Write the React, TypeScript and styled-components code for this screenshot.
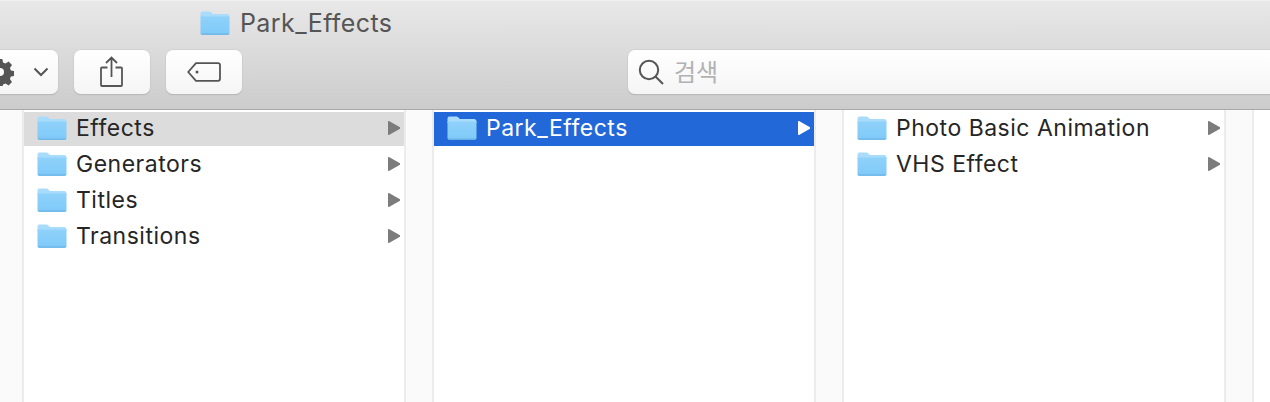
import React from "react";
import styled, { createGlobalStyle } from "styled-components";

const GlobalStyle = createGlobalStyle`
  html, body {
    margin: 0;
    padding: 0;
    background: #ffffff;
  }
  body {
    font-family: "Inter", "Liberation Sans", "Noto Sans CJK KR", sans-serif;
  }
`;

const Window = styled.div`
  width: 1270px;
  height: 402px;
  overflow: hidden;
  display: flex;
  flex-direction: column;
`;

// 상단 툴바
const Chrome = styled.div`
  height: 110px;
  box-sizing: border-box;
  flex: none;
  border-top: 1px solid #f0f0f0;
  border-bottom: 1px solid #a9a9a9;
  background: linear-gradient(#e8e8e8, #cccccc);
  display: flex;
  flex-direction: column;
`;

const TitleRow = styled.div`
  height: 44px;
  padding-left: 200px;
  display: flex;
  align-items: center;
  gap: 10px;
`;

const TitleText = styled.span`
  font-size: 25px;
  letter-spacing: 0.4px;
  color: #555555;
`;

const ToolRow = styled.div`
  display: flex;
  align-items: flex-start;
  padding-top: 5px;
`;

const ToolButton = styled.div<{ $width: number; $left: number }>`
  box-sizing: border-box;
  width: ${(p) => p.$width}px;
  height: 44px;
  margin-left: ${(p) => p.$left}px;
  flex: none;
  display: flex;
  align-items: center;
  justify-content: center;
  background: linear-gradient(#ffffff, #f5f5f5);
  border-radius: 7px;
  box-shadow: 0 0 0 0.5px #c8c8c8, 0 1px 1px #a8a8a8;
  color: #555555;
`;

const GearButton = styled(ToolButton)`
  justify-content: flex-start;
  gap: 19px;
  border-radius: 0 7px 7px 0;
  overflow: hidden;
`;

const GearClip = styled.div`
  width: 14px;
  height: 28px;
  overflow: hidden;
  display: flex;
  justify-content: flex-end;
`;

const SearchBox = styled(ToolButton)`
  justify-content: flex-start;
  padding-left: 10px;
  gap: 10px;
  border-radius: 7px 0 0 7px;
`;

const SearchHint = styled.span`
  font-size: 24px;
  line-height: 28px;
  margin-top: 1px;
  color: #b2b2b2;
`;

// 컬럼 영역
const Browser = styled.div`
  flex: 1;
  display: flex;
  background: #fafafa;
`;

const Column = styled.div<{ $left: number }>`
  box-sizing: border-box;
  width: 384px;
  flex: none;
  margin-left: ${(p) => p.$left}px;
  background: #ffffff;
  border-left: 2px solid #ececec;
  border-right: 2px solid #ececec;
`;

const EmptyColumn = styled.div`
  flex: 1;
  margin-left: 26px;
  background: #ffffff;
  border-left: 2px solid #ececec;
`;

const Row = styled.div<{ $state?: "active" | "muted" }>`
  box-sizing: border-box;
  height: 36px;
  display: flex;
  align-items: center;
  border-top: 2px solid transparent;
  padding: 0 4px 2px 13px;
  background-clip: padding-box;
  gap: 9px;
  font-size: 23px;
  letter-spacing: 0.5px;
  color: ${(p) => (p.$state === "active" ? "#ffffff" : "#262626")};
  background-color: ${(p) =>
    p.$state === "active" ? "#2368d9" : p.$state === "muted" ? "#dcdcdc" : "transparent"};
`;

const RowLabel = styled.span`
  flex: 1;
`;

const Folder = ({ size = 30 }: { size?: number }) => (
  <svg width={size} height={size * 0.8} viewBox="0 0 30 24" style={{ flex: "none" }}>
    <defs>
      <linearGradient id="folderFront" x1="0" y1="0" x2="0" y2="1">
        <stop offset="0" stopColor="#8fd2fb" />
        <stop offset="1" stopColor="#7fc9f8" />
      </linearGradient>
    </defs>
    <path
      d="M0.5 2.5C0.5 1 1.5 0.4 2.8 0.4h6.4c1 0 1.6.4 2.2 1l1.4 1.6h14.4c1.3 0 2.3 1 2.3 2.3V7H0.5z"
      fill="#a9dcfb"
    />
    <path
      d="M0.5 5.5h29v16.2c0 1.2-.9 2-2 2H2.5c-1.1 0-2-.8-2-2z"
      fill="url(#folderFront)"
    />
    <path d="M0.5 22.6h29c0 .8-.9 1.2-2 1.2H2.5c-1.1 0-2-.4-2-1.2z" fill="#68b2e6" />
  </svg>
);

const Arrow = ({ color = "#7c7c7c" }: { color?: string }) => (
  <svg width="12" height="14" viewBox="0 0 12 14" style={{ flex: "none" }}>
    <path d="M0 0.2L1 0 12 6.2V7.8L1 14 0 13.8z" fill={color} />
  </svg>
);

const columns = [
  {
    left: 22,
    rows: [
      { name: "Effects", state: "muted" as const },
      { name: "Generators" },
      { name: "Titles" },
      { name: "Transitions" },
    ],
  },
  { left: 26, rows: [{ name: "Park_Effects", state: "active" as const }] },
  { left: 26, rows: [{ name: "Photo Basic Animation" }, { name: "VHS Effect" }] },
];

const App = () => {
  return (
    <>
      <GlobalStyle />
      <Window>
        <Chrome>
          <TitleRow>
            <Folder />
            <TitleText>Park_Effects</TitleText>
          </TitleRow>
          <ToolRow>
            <GearButton $width={58} $left={0}>
              <GearClip>
                <svg width="28" height="28" viewBox="0 0 28 28" style={{ flex: "none" }}>
                  <path
                    fill="#555555"
                    fillRule="evenodd"
                    d="M11.6 1h4.8l.6 3.6 2.6 1 3-2.1 3.4 3.4-2.1 3 1 2.6 3.6.6v4.8l-3.6.6-1 2.6 2.1 3-3.4 3.4-3-2.1-2.6 1-.6 3.6h-4.8l-.6-3.6-2.6-1-3 2.1-3.4-3.4 2.1-3-1-2.6-3.6-.6v-4.8l3.6-.6 1-2.6-2.1-3 3.4-3.4 3 2.1 2.6-1zM14 10a4 4 0 1 0 0 8 4 4 0 0 0 0-8z"
                  />
                </svg>
              </GearClip>
              <svg width="16" height="10" viewBox="0 0 16 10">
                <path d="M1.5 1.5L8 8l6.5-6.5" fill="none" stroke="#555555" strokeWidth="2" />
              </svg>
            </GearButton>
            <ToolButton $width={76} $left={16}>
              <svg width="24" height="32" viewBox="0 0 24 32">
                <path
                  d="M7.5 11.5H2a1 1 0 0 0-1 1V29a1 1 0 0 0 1 1h19a1 1 0 0 0 1-1V12.5a1 1 0 0 0-1-1h-5.5M11.5 21V2M6 7l5.5-5.5L17 7"
                  fill="none"
                  stroke="#555555"
                  strokeWidth="1.8"
                />
              </svg>
            </ToolButton>
            <ToolButton $width={76} $left={16}>
              <svg width="34" height="20" viewBox="0 0 34 20">
                <path
                  d="M9 1.2h22a2 2 0 0 1 2 2v13.6a2 2 0 0 1-2 2H9L1.2 10z"
                  fill="none"
                  stroke="#555555"
                  strokeWidth="1.8"
                  strokeLinejoin="round"
                />
                <circle cx="10" cy="10" r="1.5" fill="#555555" />
              </svg>
            </ToolButton>
            <SearchBox $width={642} $left={386}>
              <svg width="26" height="26" viewBox="0 0 26 26">
                <circle cx="11" cy="11" r="9.2" fill="none" stroke="#555555" strokeWidth="2" />
                <path d="M17.5 17.5L25 25" stroke="#555555" strokeWidth="2" />
              </svg>
              <SearchHint>검색</SearchHint>
            </SearchBox>
          </ToolRow>
        </Chrome>
        <Browser>
          {columns.map((col) => (
            <Column key={col.rows[0].name} $left={col.left}>
              {col.rows.map((row) => (
                <Row key={row.name} $state={row.state}>
                  <Folder />
                  <RowLabel>{row.name}</RowLabel>
                  <Arrow color={row.state === "active" ? "#ffffff" : "#7c7c7c"} />
                </Row>
              ))}
            </Column>
          ))}
          <EmptyColumn />
        </Browser>
      </Window>
    </>
  );
};

export default App;
